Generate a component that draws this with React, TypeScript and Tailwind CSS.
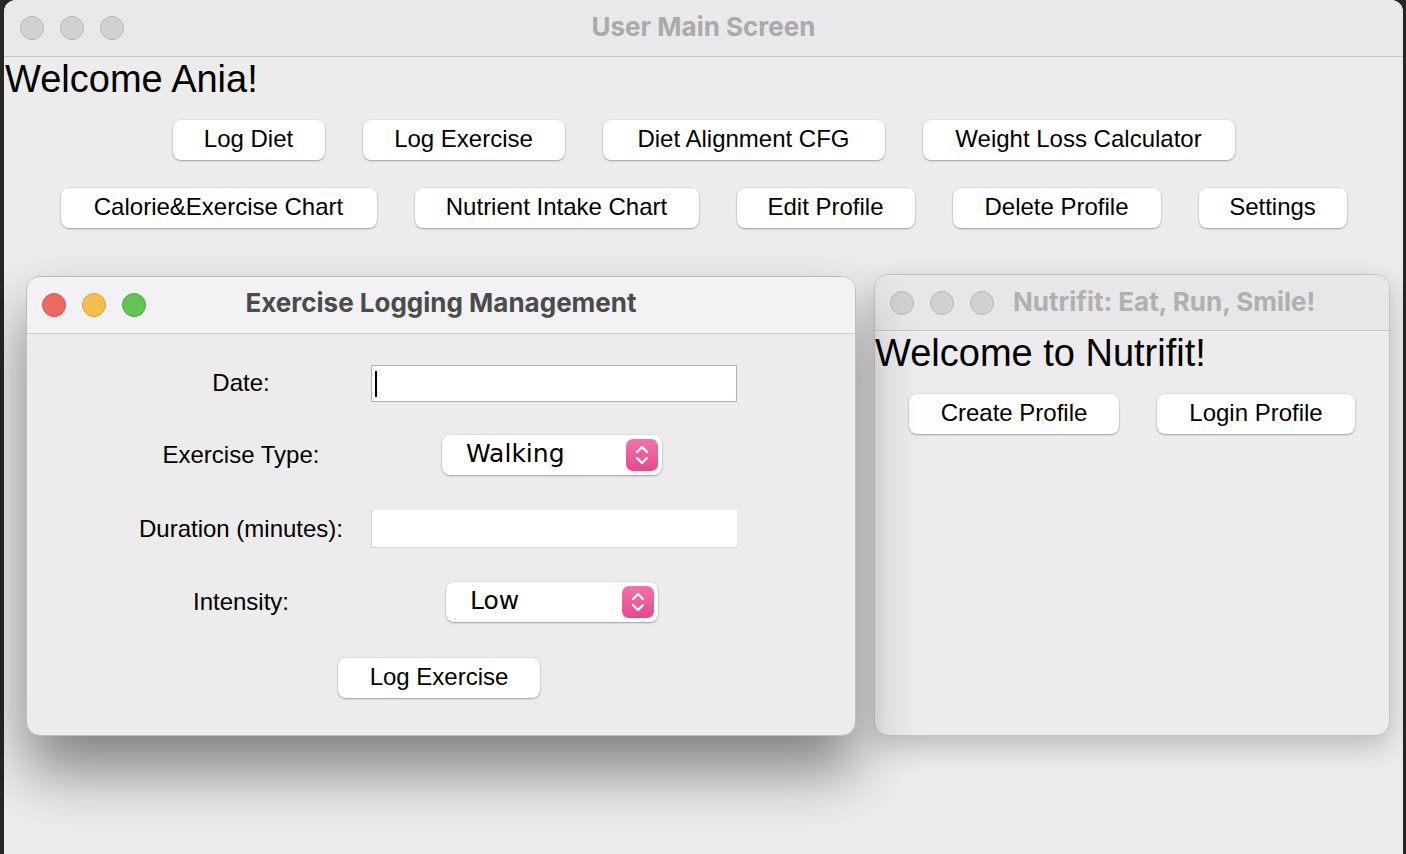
import React from "react";

const sans = { fontFamily: '"Liberation Sans", Arial, Helvetica, sans-serif' };
const titleFont = { fontFamily: 'Inter, "Noto Sans", sans-serif' };

function Lights({ active }: { active?: boolean }) {
  const cls = active
    ? ["bg-[#ee6a5f] border-[#d65a50]", "bg-[#f5bf4f] border-[#d9a53c]", "bg-[#61c454] border-[#4ea842]"]
    : ["bg-[#d1d0d2] border-[#b8b7b9]", "bg-[#d1d0d2] border-[#b8b7b9]", "bg-[#d1d0d2] border-[#b8b7b9]"];
  return (
    <div className="flex gap-[16px]">
      {cls.map((c, i) => (
        <span key={i} className={"block w-[24px] h-[24px] rounded-full border " + c} />
      ))}
    </div>
  );
}

function Btn({ label, w }: { label: string; w: string }) {
  return (
    <button
      className={
        "h-[40px] pb-[3px] rounded-[8px] bg-white text-[24px] text-black shadow-[0_1px_2px_rgba(0,0,0,0.3),0_0_0_0.5px_rgba(0,0,0,0.08)] " + w
      }
      style={sans}
    >
      {label}
    </button>
  );
}

function Stepper() {
  return (
    <span className="flex items-center justify-center w-[32px] h-[32px] rounded-[7px] bg-gradient-to-b from-[#f271ad] to-[#e8478c]">
      <svg width="18" height="24" viewBox="0 0 18 24" fill="none" stroke="white" strokeWidth="2.4" strokeLinecap="round" strokeLinejoin="round">
        <path d="M4 9 L9 4 L14 9" />
        <path d="M4 15 L9 20 L14 15" />
      </svg>
    </span>
  );
}

function Select({ value, w }: { value: string; w: string }) {
  return (
    <div
      className={
        "flex items-center justify-between h-[40px] pl-[24px] pr-[4px] rounded-[8px] bg-white shadow-[0_1px_2px_rgba(0,0,0,0.3),0_0_0_0.5px_rgba(0,0,0,0.08)] " + w
      }
    >
      <span className="text-[25px] text-black pb-[2px]" style={{ fontFamily: '"DejaVu Sans", Verdana, sans-serif' }}>
        {value}
      </span>
      <Stepper />
    </div>
  );
}

export default function App() {
  return (
    <div className="relative w-[1406px] h-[854px] overflow-hidden bg-[#262626]">
      {/* main window */}
      <div className="ml-[4px] w-[1399px] h-[900px] rounded-t-[12px] bg-[#ececec] overflow-hidden">
        <div className="relative flex items-center h-[57px] px-[16px] bg-[#e9e8ea] border-b border-[#c9c9c9]">
          <Lights />
          <div className="absolute inset-0 pb-[3px] flex items-center justify-center text-[26px] font-bold text-[#aaaaaa]" style={titleFont}>
            User Main Screen
          </div>
        </div>
        <div className="text-[38px] leading-[44px] text-black pl-[1px]" style={sans}>
          Welcome Ania!
        </div>
        <div className="flex justify-center gap-[38px] mt-[19px]">
          <Btn label="Log Diet" w="w-[152px]" />
          <Btn label="Log Exercise" w="w-[202px]" />
          <Btn label="Diet Alignment CFG" w="w-[282px]" />
          <Btn label="Weight Loss Calculator" w="w-[312px]" />
        </div>
        <div className="flex justify-center gap-[38px] mt-[28px]">
          <Btn label="Calorie&Exercise Chart" w="w-[316px]" />
          <Btn label="Nutrient Intake Chart" w="w-[284px]" />
          <Btn label="Edit Profile" w="w-[178px]" />
          <Btn label="Delete Profile" w="w-[208px]" />
          <Btn label="Settings" w="w-[148px]" />
        </div>
      </div>

      {/* Nutrifit window */}
      <div className="absolute left-[874px] top-[274px] w-[516px] h-[462px] rounded-[14px] bg-[#ececec] border border-[#c4c4c4] overflow-hidden shadow-[0_10px_30px_rgba(0,0,0,0.22)]">
        <div className="relative flex items-center h-[56px] pl-[15px] bg-[#e7e6e8] border-b border-[#c9c9c9]">
          <Lights />
          <div className="ml-[19px] pb-[2px] text-[26px] font-bold text-[#b0b0b0]" style={titleFont}>
            Nutrifit: Eat, Run, Smile!
          </div>
        </div>
        <div className="text-[38px] leading-[44px] text-black" style={sans}>
          Welcome to Nutrifit!
        </div>
        <div className="flex justify-center gap-[38px] mt-[19px]">
          <Btn label="Create Profile" w="w-[210px]" />
          <Btn label="Login Profile" w="w-[198px]" />
        </div>
      </div>

      {/* Exercise Logging window */}
      <div className="absolute left-[26px] top-[276px] w-[830px] h-[460px] rounded-[14px] bg-[#ececec] border border-[#bdbdbd] overflow-hidden shadow-[0_35px_60px_rgba(0,0,0,0.45)]">
        <div className="relative flex items-center h-[57px] px-[15px] bg-[#f2f1f4] border-b border-[#cfcfcf]">
          <Lights active />
          <div className="absolute inset-0 pb-[5px] flex items-center justify-center text-[26px] font-bold text-[#4b4b4b]" style={titleFont}>
            Exercise Logging Management
          </div>
        </div>
        <div className="pt-[13px] text-[24px] text-black" style={sans}>
          <div className="flex items-center h-[72px]">
            <div className="w-[220px] ml-[104px] text-center">Date:</div>
            <div className="ml-[20px] w-[366px]">
              <div className="relative w-[366px] h-[37px] bg-white border border-[#bfa9b6]">
                <span className="absolute left-[3px] top-[5px] w-[2px] h-[26px] bg-black" />
              </div>
            </div>
          </div>
          <div className="flex items-center h-[72px]">
            <div className="w-[220px] ml-[104px] text-center">Exercise Type:</div>
            <div className="ml-[20px] w-[366px] pl-[71px]">
              <Select value="Walking" w="w-[220px]" />
            </div>
          </div>
          <div className="flex items-center h-[76px]">
            <div className="w-[220px] ml-[104px] text-center">Duration (minutes):</div>
            <div className="ml-[20px] w-[366px]">
              <div className="w-[366px] h-[38px] bg-white border-l border-b border-[#d4d4d4] border-t-[#ececec]" />
            </div>
          </div>
          <div className="flex items-center h-[70px]">
            <div className="w-[220px] ml-[104px] text-center">Intensity:</div>
            <div className="ml-[20px] w-[366px] pl-[75px]">
              <Select value="Low" w="w-[212px]" />
            </div>
          </div>
          <div className="flex items-center justify-center h-[82px] pr-[4px]">
            <Btn label="Log Exercise" w="w-[202px]" />
          </div>
        </div>
      </div>
    </div>
  );
}
